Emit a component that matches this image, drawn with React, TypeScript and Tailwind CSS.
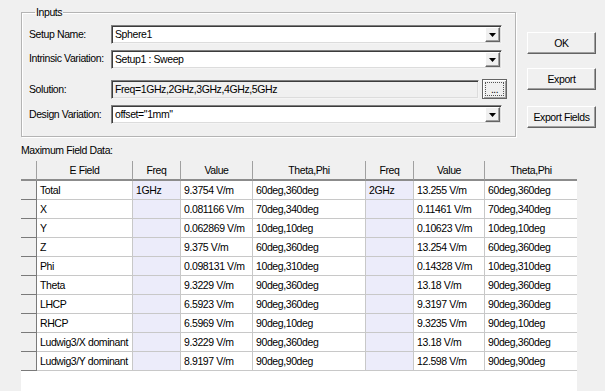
import React from "react";

const rows = [
  ["Total", "1GHz", "9.3754 V/m", "60deg,360deg", "2GHz", "13.255 V/m", "60deg,360deg"],
  ["X", "", "0.081166 V/m", "70deg,340deg", "", "0.11461 V/m", "70deg,340deg"],
  ["Y", "", "0.062869 V/m", "10deg,10deg", "", "0.10623 V/m", "10deg,10deg"],
  ["Z", "", "9.375 V/m", "60deg,360deg", "", "13.254 V/m", "60deg,360deg"],
  ["Phi", "", "0.098131 V/m", "10deg,310deg", "", "0.14328 V/m", "10deg,310deg"],
  ["Theta", "", "9.3229 V/m", "90deg,360deg", "", "13.18 V/m", "90deg,360deg"],
  ["LHCP", "", "6.5923 V/m", "90deg,360deg", "", "9.3197 V/m", "90deg,360deg"],
  ["RHCP", "", "6.5969 V/m", "90deg,10deg", "", "9.3235 V/m", "90deg,10deg"],
  ["Ludwig3/X dominant", "", "9.3229 V/m", "90deg,360deg", "", "13.18 V/m", "90deg,360deg"],
  ["Ludwig3/Y dominant", "", "8.9197 V/m", "90deg,90deg", "", "12.598 V/m", "90deg,90deg"],
];

const headers = ["E Field", "Freq", "Value", "Theta,Phi", "Freq", "Value", "Theta,Phi"];

const sunken =
  "border border-t-[#7f7f7f] border-l-[#7f7f7f] border-r-[#f4f4f4] border-b-[#f4f4f4] shadow-[inset_1px_1px_0_#3c3c3c,inset_-1px_-1px_0_#dcdcdc]";

const raised =
  "border border-t-[#ffffff] border-l-[#ffffff] border-r-[#646464] border-b-[#646464] shadow-[inset_-1px_-1px_0_#a0a0a0]";

const Combo = ({ value }: { value: string }) => (
  <div className={`flex-1 h-[19px] bg-white flex items-center ${sunken}`}>
    <span className="flex-1 pl-[3px] truncate">{value}</span>
    <div className={`w-[15px] h-[15px] mr-[1px] bg-[#f0f0f0] flex items-center justify-center ${raised}`}>
      <svg width="7" height="4" viewBox="0 0 7 4">
        <path d="M0 0h7L3.5 4z" fill="#000" />
      </svg>
    </div>
  </div>
);

const Button = ({ label }: { label: string }) => (
  <button className={`w-[69px] h-[22px] bg-[#f0f0f0] text-black whitespace-nowrap flex items-center justify-center ${raised}`}>
    {label}
  </button>
);

export default function App() {
  return (
    <div className="w-[605px] h-[391px] overflow-hidden bg-[#f0f0f0] text-black text-[10.5px] tracking-[-0.4px] leading-[13px] font-['Liberation_Sans',Arial,sans-serif] flex flex-col">
      <div className="flex pl-[21px] pt-[6px]">
        <fieldset className="w-[495px] h-[131px] border border-[#b4b4b4] shadow-[inset_1px_1px_0_#fff,1px_1px_0_#fff] pl-[7px] pr-[8px] pt-[6px]">
          <legend className="ml-[6px] px-[1px]">Inputs</legend>
          <div className="flex items-center mr-[5px]">
            <span className="w-[82px] whitespace-nowrap -mt-[1px]">Setup Name:</span>
            <Combo value="Sphere1" />
          </div>
          <div className="flex items-center mr-[5px] mt-[6px]">
            <span className="w-[82px] whitespace-nowrap -mt-[3px]">Intrinsic Variation:</span>
            <Combo value="Setup1 : Sweep" />
          </div>
          <div className="flex items-center mt-[10px]">
            <span className="w-[82px] whitespace-nowrap">Solution:</span>
            <div className={`flex-1 h-[19px] bg-[#f0f0f0] flex items-center pl-[3px] ${sunken}`}>
              Freq=1GHz,2GHz,3GHz,4GHz,5GHz
            </div>
            <div className="ml-[3px] w-[25px] h-[20px] border border-[#646464] bg-[#f0f0f0] p-[2px] shadow-[inset_1px_1px_0_#fff,inset_-1px_-1px_0_#a0a0a0]">
              <div className="w-full h-full border border-dotted border-[#555] flex items-end justify-center leading-[10px] text-[10px]">
                ...
              </div>
            </div>
          </div>
          <div className="flex items-center mr-[5px] mt-[6px]">
            <span className="w-[82px] whitespace-nowrap">Design Variation:</span>
            <Combo value={`offset="1mm"`} />
          </div>
        </fieldset>
        <div className="ml-[11px] pt-[26px] flex flex-col">
          <Button label="OK" />
          <div className="mt-[14px]">
            <Button label="Export" />
          </div>
          <div className="mt-[16px]">
            <Button label="Export Fields" />
          </div>
        </div>
      </div>

      <div className="pl-[21px] mt-[7px]">Maximum Field Data:</div>

      <div className="ml-[21px] mt-[4px] w-[556px] flex-1 bg-white">
        <div className="grid grid-cols-[16px_96px_48px_72px_113px_48px_71px_92px]">
          <div className="h-[20px] bg-[#f0f0f0] border-r border-r-[#a0a0a0] border-b-2 border-b-[#8c8c8c]" />
          {headers.map((h, i) => (
            <div
              key={i}
              className={`h-[20px] bg-[#f0f0f0] flex items-center justify-center border-b-2 border-b-[#8c8c8c] ${
                i < headers.length - 1 ? "border-r border-r-[#a0a0a0]" : ""
              }`}
            >
              {h}
            </div>
          ))}
          {rows.map((r) => (
            <React.Fragment key={r[0]}>
              <div className="h-[19px] bg-[#f0f0f0] border-r border-r-[#7a7a7a] border-b border-b-[#7a7a7a]" />
              {r.map((c, j) => (
                <div
                  key={j}
                  className={`h-[19px] flex items-center pl-[3px] whitespace-nowrap overflow-hidden border-b border-b-[#c8c8c8] ${
                    j === 1 || j === 4 ? "bg-[#ececfa]" : "bg-white"
                  } ${j < r.length - 1 ? "border-r border-r-[#c8c8c8]" : ""}`}
                >
                  {c}
                </div>
              ))}
            </React.Fragment>
          ))}
        </div>
      </div>
    </div>
  );
}
